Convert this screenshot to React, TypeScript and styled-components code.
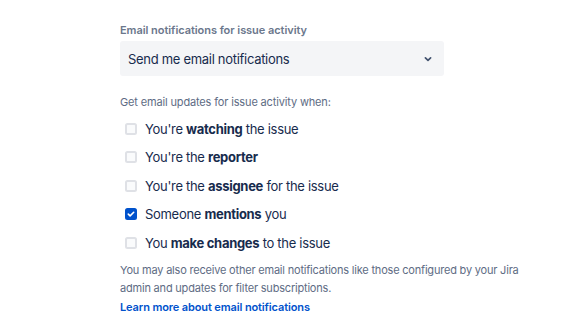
import styled, { createGlobalStyle } from "styled-components";

const GlobalStyle = createGlobalStyle`
  html, body {
    margin: 0;
    padding: 0;
    background: #ffffff;
  }
  body {
    font-family: Inter, "Noto Sans", "Liberation Sans", sans-serif;
    color: #172b4d;
  }
`;

const Page = styled.div`
  width: 579px;
  height: 331px;
  padding: 22px 0 0 120px;
  box-sizing: border-box;
`;

const Field = styled.div`
  width: 324px;
`;

const Label = styled.label`
  display: block;
  font-size: 11px;
  font-weight: 600;
  line-height: 16px;
  letter-spacing: -0.05px;
  color: #6b778c;
  margin-bottom: 3px;
`;

const Select = styled.div`
  height: 35px;
  border-radius: 3px;
  background: #f4f5f7;
  display: flex;
  align-items: center;
  justify-content: space-between;
  padding: 0 11px 0 8px;
  font-size: 13px;
  letter-spacing: -0.3px;
  color: #172b4d;
`;

const Hint = styled.p`
  margin: 18px 0 4.5px;
  font-size: 11px;
  line-height: 16px;
  letter-spacing: -0.15px;
  color: #5e6c84;
`;

const List = styled.div`
  display: flex;
  flex-direction: column;
`;

const Row = styled.label`
  display: flex;
  align-items: center;
  height: 28.5px;
  padding-left: 5px;
  font-size: 13px;
  letter-spacing: -0.3px;
  color: #172b4d;
  b {
    font-weight: 700;
  }
`;

const Box = styled.span<{ $checked?: boolean }>`
  width: 12px;
  height: 12px;
  box-sizing: border-box;
  border-radius: 2.5px;
  margin-right: 8px;
  display: flex;
  align-items: center;
  justify-content: center;
  background: ${(p) => (p.$checked ? "#0052cc" : "#fafbfc")};
  border: 2px solid ${(p) => (p.$checked ? "#0052cc" : "#dfe1e6")};
`;

const Note = styled.p`
  margin: 3.5px 0 0;
  width: 430px;
  font-size: 11px;
  line-height: 18.5px;
  letter-spacing: -0.2px;
  color: #5e6c84;
`;

const Link = styled.a`
  display: block;
  font-size: 11px;
  font-weight: 600;
  line-height: 18.5px;
  letter-spacing: -0.12px;
  color: #0052cc;
  text-decoration: none;
`;

const Chevron = () => (
  <svg width="10" height="10" viewBox="0 0 10 10">
    <path
      d="M2.4 3.8L5 6.3l2.6-2.5"
      fill="none"
      stroke="#42526e"
      strokeWidth="1.7"
      strokeLinecap="round"
      strokeLinejoin="round"
    />
  </svg>
);

const Check = () => (
  <svg width="8" height="8" viewBox="0 0 8 8">
    <path
      d="M1.3 4.1l1.8 1.8L6.7 2.3"
      fill="none"
      stroke="#ffffff"
      strokeWidth="1.6"
      strokeLinecap="round"
      strokeLinejoin="round"
    />
  </svg>
);

const options = [
  { pre: "You're ", bold: "watching", post: " the issue", checked: false },
  { pre: "You're the ", bold: "reporter", post: "", checked: false },
  { pre: "You're the ", bold: "assignee", post: " for the issue", checked: false },
  { pre: "Someone ", bold: "mentions", post: " you", checked: true },
  { pre: "You ", bold: "make changes", post: " to the issue", checked: false },
];

export default function App() {
  return (
    <>
      <GlobalStyle />
      <Page>
        <Field>
          <Label>Email notifications for issue activity</Label>
          <Select>
            <span>Send me email notifications</span>
            <Chevron />
          </Select>
        </Field>
        <Hint>Get email updates for issue activity when:</Hint>
        <List>
          {options.map((o) => (
            <Row key={o.bold}>
              <Box $checked={o.checked}>{o.checked ? <Check /> : null}</Box>
              <span>
                {o.pre}
                <b>{o.bold}</b>
                {o.post}
              </span>
            </Row>
          ))}
        </List>
        <Note>
          You may also receive other email notifications like those configured by your Jira
          admin and updates for filter subscriptions.
        </Note>
        <Link href="#">Learn more about email notifications</Link>
      </Page>
    </>
  );
}
